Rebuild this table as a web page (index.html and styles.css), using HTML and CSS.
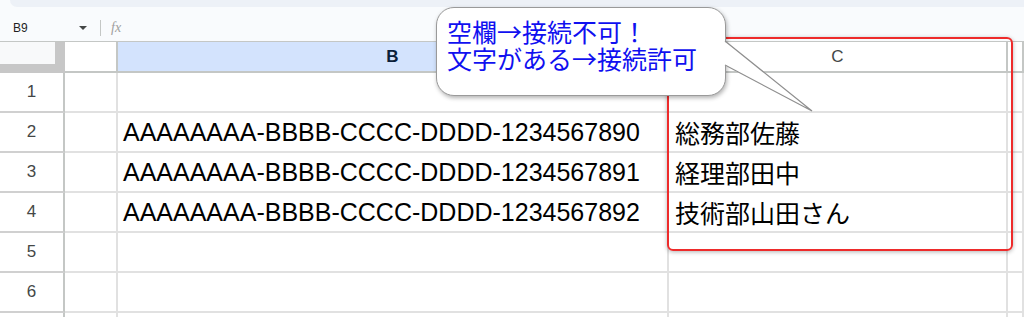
FILE: index.html
```html
<!DOCTYPE html>
<html>
<head>
    <meta charset="utf-8">
    <link rel="stylesheet" href="styles.css">
</head>
<body>
    <div class="topBand">
        <div class="searchPill"></div>
    </div>

    <!-- name box + formula input -->
    <div class="formulaBar">
        <span class="nameBox">B9</span>
        <span class="caret"></span>
        <span class="divider"></span>
        <span class="fx">fx</span>
    </div>

    <div class="sheet">
        <div class="corner"></div>
        <div class="colHead"></div>
        <div class="colHead active">B</div>
        <div class="colHead">C</div>
        <div class="colHead"></div>

        <div class="rowHead">1</div>
        <div class="cell"></div>
        <div class="cell"></div>
        <div class="cell"></div>
        <div class="cell"></div>

        <div class="rowHead">2</div>
        <div class="cell"></div>
        <div class="cell code">AAAAAAAA-BBBB-CCCC-DDDD-1234567890</div>
        <div class="cell name">総務部佐藤</div>
        <div class="cell"></div>

        <div class="rowHead">3</div>
        <div class="cell"></div>
        <div class="cell code">AAAAAAAA-BBBB-CCCC-DDDD-1234567891</div>
        <div class="cell name">経理部田中</div>
        <div class="cell"></div>

        <div class="rowHead">4</div>
        <div class="cell"></div>
        <div class="cell code">AAAAAAAA-BBBB-CCCC-DDDD-1234567892</div>
        <div class="cell name">技術部山田さん</div>
        <div class="cell"></div>

        <div class="rowHead">5</div>
        <div class="cell"></div>
        <div class="cell"></div>
        <div class="cell"></div>
        <div class="cell"></div>

        <div class="rowHead">6</div>
        <div class="cell"></div>
        <div class="cell"></div>
        <div class="cell"></div>
        <div class="cell"></div>

        <div class="rowHead"></div>
        <div class="cell"></div>
        <div class="cell"></div>
        <div class="cell"></div>
        <div class="cell"></div>
    </div>

    <!-- red frame around column C -->
    <div class="rangeBox"></div>

    <!-- speech balloon -->
    <div class="callout">
        <svg class="tail" width="92" height="76" viewBox="0 0 92 76">
            <polygon points="0,2 88,72 0,26" fill="#fff" />
            <polyline points="1,2 88,72 1,26" fill="none" stroke="#8f8f8f" stroke-width="1.2" />
        </svg>
        <div class="calloutText">空欄→接続不可！<br>文字がある→接続許可</div>
    </div>
</body>
</html>
```

FILE: styles.css
```css
body {
    margin: 0;
    overflow: hidden;
    background-color: #ffffff;
    font-family: "Liberation Sans", Arial, sans-serif;
}

.topBand {
    height: 15px;
    background-color: #f9fbfd;
}

.searchPill {
    margin-left: 10px;
    height: 7px;
    background-color: #edf1f7;
    border-bottom-left-radius: 8px;
}

.formulaBar {
    display: flex;
    align-items: center;
    height: 26px;
    background-color: #f9fbfd;
    border-bottom: 1px solid #c4c7c5;
}

.nameBox {
    width: 66px;
    padding-left: 13px;
    font-size: 12px;
    color: #1f1f1f;
}

.caret {
    width: 0;
    height: 0;
    border-left: 4px solid transparent;
    border-right: 4px solid transparent;
    border-top: 4px solid #444746;
}

.divider {
    width: 1px;
    height: 16px;
    margin-left: 13px;
    background-color: #c4c7c5;
}

.fx {
    margin-left: 10px;
    font-family: "Liberation Serif", serif;
    font-style: italic;
    font-size: 14px;
    color: #a0a0a0;
}

.sheet {
    display: grid;
    grid-template-columns: 65px 53px 551px 339px 1fr;
    grid-template-rows: 31px repeat(7, 40px);
}

.sheet > div {
    box-sizing: border-box;
    display: flex;
    align-items: center;
    border-right: 2px solid #e1e1e1;
    border-bottom: 2px solid #e1e1e1;
}

.corner {
    background-color: #f8f9fa;
    border-right: 10px solid #c7c7c7 !important;
    border-bottom: 9px solid #c7c7c7 !important;
}

.colHead {
    justify-content: center;
    font-size: 17px;
    color: #444746;
    border-bottom-color: #c4c7c5 !important;
    border-right-color: #c4c7c5 !important;
}

.colHead.active {
    background-color: #d3e3fd;
    color: #0b1f3a;
    font-weight: bold;
}

.rowHead {
    justify-content: center;
    font-size: 17px;
    color: #444746;
    border-right-color: #c4c7c5 !important;
    border-bottom-color: #d0d0d0 !important;
}

.cell {
    white-space: nowrap;
    font-size: 25px;
    color: #000000;
}

.code {
    padding-left: 5px;
}

.name {
    padding-left: 6px;
    font-family: "Noto Sans CJK JP", sans-serif;
    font-size: 25px;
}

.rangeBox {
    position: absolute;
    left: 667px;
    top: 37px;
    width: 346px;
    height: 214px;
    box-sizing: border-box;
    border: 2px solid #ee2b2b;
    border-radius: 6px;
    box-shadow: 0 1px 4px rgba(0, 0, 0, 0.3);
}

.callout {
    position: absolute;
    left: 436px;
    top: 7px;
    width: 290px;
    height: 89px;
    box-sizing: border-box;
    background-color: #ffffff;
    border: 1px solid #9a9a9a;
    border-radius: 18px;
    box-shadow: 1px 2px 4px rgba(0, 0, 0, 0.3);
}

.tail {
    position: absolute;
    left: 287px;
    top: 31px;
}

.calloutText {
    padding: 10px 0 0 10px;
    font-family: "Noto Sans CJK JP", sans-serif;
    font-size: 25px;
    line-height: 27px;
    color: #1010f0;
    white-space: nowrap;
}
```
